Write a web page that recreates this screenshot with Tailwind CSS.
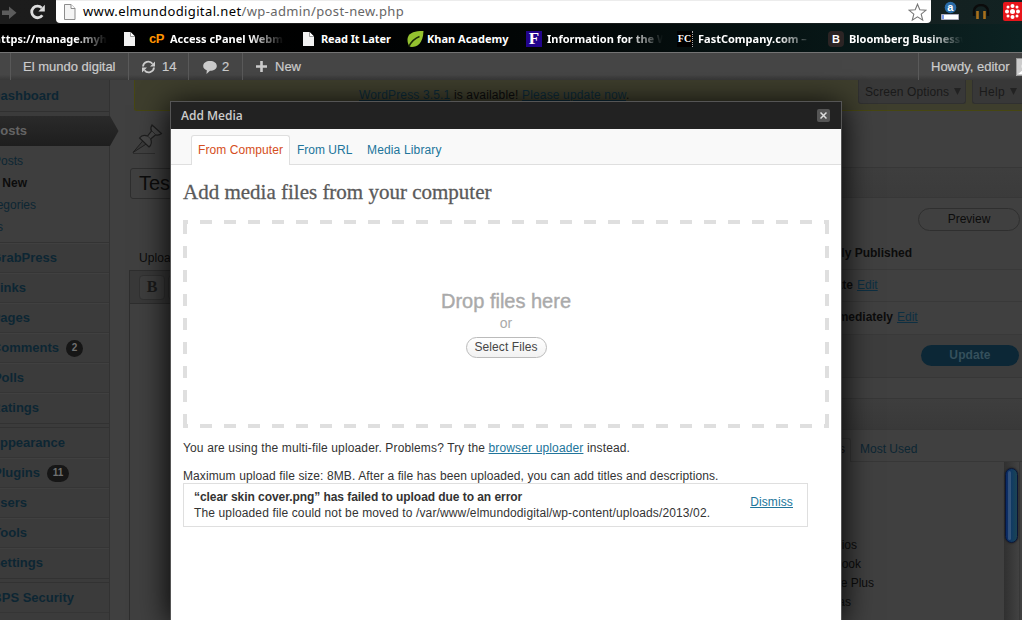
<!DOCTYPE html>
<html lang="en">
<head>
<meta charset="utf-8">
<title>Add New Post</title>
<script src="https://cdn.jsdelivr.net/npm/@tailwindcss/browser@4"></script>
</head>
<body class="relative flex h-[620px] w-[1022px] flex-col overflow-hidden bg-[#404040] font-['Liberation_Sans',sans-serif] text-[12px] leading-4 whitespace-nowrap">

<!-- browser toolbar -->
<header class="flex h-6 shrink-0 bg-linear-to-r from-[#1c1c1c] via-[#1a1a1a] to-[#122222]">
  <div class="flex w-14 shrink-0 pt-1">
    <svg class="mt-px ml-[2px] h-4 w-4" viewBox="0 0 16 16"><path d="M0 5.500h7V1.500l7.500 6.200L7 14v-4H0z" fill="#5c5c5c"/></svg>
    <svg class="ml-3 h-4 w-4" viewBox="0 0 16 16"><path d="M12.300 11.200a5.800 5.800 0 1 1-.6-7.300" fill="none" stroke="#ddd" stroke-width="2.800"/><path d="M14.800.8v6.600H8.400z" fill="#ddd"/></svg>
  </div>
  <div class="flex h-[23px] w-[875px] shrink-0 items-center rounded-b-[4px] border-t border-[#ececec] bg-white pl-2">
    <svg class="h-4 w-3" viewBox="0 0 12 16"><path d="M.5.5h6.500l4 4V15.500H.5z" fill="#f4f4f4" stroke="#8d8d8d"/><path d="M7 .5v4h4" fill="#fff" stroke="#8d8d8d"/></svg>
    <span class="-mt-[2px] ml-[7px] font-['Noto_Sans'] text-[13px] tracking-[0.386px] text-black">www.elmundodigital.net<span class="text-[#666]">/wp-admin/post-new.php</span></span>
    <svg class="mr-1 ml-auto h-[19px] w-[19px]" viewBox="0 0 19 19"><path d="M9.500 1.200l2.300 5.600 6 .5-4.600 3.900 1.500 5.900-5.200-3.200-5.200 3.200 1.500-5.900L1.200 7.300l6-.5z" fill="#fff" stroke="#777" stroke-width="1.100"/></svg>
  </div>
  <svg class="mt-px ml-[9px] h-5 w-5" viewBox="0 0 20 20"><circle cx="10.500" cy="6.500" r="5.800" fill="#2a6ca8"/><text x="7.200" y="10" font-family="Liberation Sans" font-size="11" font-weight="700" fill="#fff">a</text><path d="M1.500 13.500h17v5h-17z" fill="#fff" stroke="#aab"/><path d="M2 14h2v4H2z" fill="#7c9bea"/></svg>
  <svg class="mt-1 ml-3 h-4 w-[18px]" viewBox="0 0 18 16"><path d="M2 12V7a7 6 0 0 1 14 0v5" fill="none" stroke="#0b0b0b" stroke-width="2.400"/><path d="M5.500 7v8M12.500 7v8" stroke="#a8701c" stroke-width="2.600"/></svg>
  <svg class="mt-[2px] ml-[13px] h-[19px] w-[19px] shrink-0" viewBox="0 0 19 19"><path d="M0 2a2 2 0 0 1 2-2h17v19H2a2 2 0 0 1-2-2z" fill="#e8151b"/><g fill="#fff"><circle cx="9.500" cy="9.500" r="2.500"/><circle cx="9.500" cy="4" r="2"/><circle cx="9.500" cy="15" r="2"/><circle cx="4" cy="9.500" r="2"/><circle cx="15" cy="9.500" r="2"/><circle cx="5" cy="5" r="1.500"/><circle cx="14" cy="5" r="1.500"/><circle cx="5" cy="14" r="1.500"/><circle cx="14" cy="14" r="1.500"/></g></svg>
</header>

<!-- bookmarks bar -->
<nav class="flex h-[29px] shrink-0 items-center border-b border-[#747474] bg-linear-to-r from-black via-[#020505] to-[#0c2222] pt-px font-['Noto_Sans'] text-[11px] font-bold text-white">
  <div class="flex w-[107px] shrink-0 justify-end overflow-hidden mask-r-from-70%">https://manage.myh</div>
  <svg class="ml-[17px] h-[14px] w-[11px] shrink-0" viewBox="0 0 11 14"><path d="M0 0h6.500l4.500 4.500V14H0z" fill="#f2f2f2"/><path d="M6.500 0v4.500H11" fill="#fff" stroke="#888" stroke-width=".8"/></svg>
  <span class="ml-[14px] w-4 shrink-0 font-['Liberation_Sans'] text-[13px] tracking-[-0.5px] text-[#ff9500]">cP</span>
  <div class="ml-[5px] w-[114px] shrink-0 overflow-hidden mask-r-from-70%">Access cPanel Webm</div>
  <svg class="ml-[19px] h-[14px] w-[11px] shrink-0" viewBox="0 0 11 14"><path d="M0 0h6.500l4.500 4.500V14H0z" fill="#f2f2f2"/><path d="M6.500 0v4.500H11" fill="#fff" stroke="#888" stroke-width=".8"/></svg>
  <div class="ml-[7px] w-[86px] shrink-0 tracking-[-0.1px]">Read It Later</div>
  <svg class="h-4 w-[17px] shrink-0" viewBox="0 0 17 16"><path d="M16.500 0C8-.4 1 2 .5 8c-.2 3 .8 6 2.500 7.800C9 16.500 16 14 16.500 0z" fill="#94c22f"/><path d="M1.800 15.500C5 9.500 8.500 7 12.500 5.500" stroke="#1c2a08" stroke-width="1.600" fill="none"/></svg>
  <div class="ml-[3px] w-[99px] shrink-0">Khan Academy</div>
  <span class="flex h-4 w-4 shrink-0 items-center justify-center bg-[#22048c] font-['Liberation_Serif'] text-[17px]">F</span>
  <div class="ml-[5px] w-[116px] shrink-0 overflow-hidden mask-r-from-70%">Information for the W</div>
  <span class="ml-[14px] flex h-4 w-4 shrink-0 items-center justify-center border-r border-dotted border-[#aaa] bg-black font-['Liberation_Serif'] text-[10px]">FC</span>
  <div class="ml-[5px] w-[114px] shrink-0 overflow-hidden mask-r-from-70%">FastCompany.com –</div>
  <span class="ml-4 flex h-4 w-4 shrink-0 items-center justify-center rounded-sm bg-[#2b2424] font-['Liberation_Sans'] text-[11px]">B</span>
  <div class="ml-[5px] w-[114px] shrink-0 overflow-hidden mask-r-from-70%">Bloomberg Businessw</div>
</nav>

<!-- WordPress admin bar -->
<div class="flex h-[27px] shrink-0 items-center bg-linear-to-b from-[#464646] from-80% to-[#383838] text-[13px] text-[#ccc] [-webkit-text-stroke:0.2px_#ccc]">
  <div class="h-full w-[11px] border-r border-[#585858]"></div>
  <div class="flex h-full w-[118px] items-center border-r border-[#5a5a5a] pl-3">El mundo digital</div>
  <div class="flex h-full w-[60px] items-center border-r border-[#5a5a5a] pl-3">
    <svg class="h-[14px] w-[15px]" viewBox="0 0 15 14"><g fill="none" stroke="#ccc" stroke-width="1.800"><path d="M2 6.500A5.300 5.300 0 0 1 11.500 3.800"/><path d="M13 7.500A5.300 5.300 0 0 1 3.500 10.200"/></g><path d="M14 1.500v5H9zM1 12.500v-5h5z" fill="#ccc"/></svg>
    <span class="ml-[6px]">14</span></div>
  <div class="flex h-full w-[54px] items-center border-r border-[#5a5a5a] pl-[14px]">
    <svg class="h-[14px] w-[14px]" viewBox="0 0 14 14"><path d="M7 1c4 0 6.800 2 6.800 5S11 10.800 7 10.800L3.500 14l.3-3.700C1.500 9.500.2 8 .2 6 .2 3 3 1 7 1z" fill="#ccc"/></svg>
    <span class="ml-[5px]">2</span></div>
  <div class="flex h-full items-center pl-[13px]">
    <svg class="h-[11px] w-[11px]" viewBox="0 0 11 11"><path d="M5.500 0v11M0 5.500h11" stroke="#ccc" stroke-width="2.600"/></svg>
    <span class="ml-2">New</span></div>
  <div class="ml-auto flex h-full w-[104px] items-center border-l border-[#5a5a5a] pl-3"><span>Howdy, editor</span>
    <svg class="ml-[6px] h-[18px] w-[8px] shrink-0" viewBox="0 0 8 18"><path d="M0 0h8v18H0z" fill="#ccc"/><path d="M8 5C5 5 5 10 7 12l-5 4h6z" fill="#fff"/><path d="M.5 0v17.500H8M0 .5h8" stroke="#999" fill="none"/></svg></div>
</div>

<!-- dimmed admin page -->
<div class="flex min-h-0 flex-1 overflow-hidden">
  <!-- admin menu -->
  <aside class="flex w-[110px] shrink-0 flex-col overflow-hidden border-r border-[#323232] bg-[#3b3b3b] text-[13px] font-bold text-[#0d2633]">
    <div class="flex h-8 shrink-0 items-center border-b border-[#303030]"><div class="flex w-[59px] justify-end">Dashboard</div></div>
    <div class="mt-1 flex h-[30px] shrink-0 items-center bg-linear-to-b from-[#2a2a2a] to-[#1e1e1e] text-[#646464]"><div class="flex w-[27px] justify-end">Posts</div></div>
    <div class="flex h-[97px] shrink-0 flex-col border-b border-[#333] bg-[#3e3e3e] pt-1 text-[12px] font-normal">
      <div class="flex h-[22px] w-[23px] items-center justify-end">All Posts</div>
      <div class="flex h-[22px] w-[27px] items-center justify-end font-bold text-[#0c0c0c]">Add New</div>
      <div class="flex h-[22px] w-9 items-center justify-end">Categories</div>
      <div class="flex h-[22px] w-[3px] items-center justify-end">Tags</div>
    </div>
    <div class="flex h-[30px] shrink-0 items-center border-t border-b border-t-[#404040] border-b-[#353535]"><div class="flex w-[57px] justify-end">GrabPress</div></div>
    <div class="flex h-[30px] shrink-0 items-center border-t border-b border-t-[#404040] border-b-[#353535]"><div class="flex w-[26px] justify-end">Links</div></div>
    <div class="flex h-[30px] shrink-0 items-center border-t border-b border-t-[#404040] border-b-[#353535]"><div class="flex w-[30px] justify-end">Pages</div></div>
    <div class="flex h-[30px] shrink-0 items-center border-t border-b border-t-[#404040] border-b-[#353535]"><div class="flex w-[59px] justify-end">Comments</div><span class="ml-[7px] flex h-[17px] w-[17px] items-center justify-center rounded-full bg-[#161616] text-[10px] text-[#707070]">2</span></div>
    <div class="flex h-[30px] shrink-0 items-center border-t border-b border-t-[#404040] border-b-[#353535]"><div class="flex w-6 justify-end">Polls</div></div>
    <div class="flex h-[31px] shrink-0 items-center border-t border-b border-t-[#404040] border-b-[#323232] pb-px"><div class="flex w-[39px] justify-end">Ratings</div></div>
    <div class="mt-[3px] flex h-[31px] shrink-0 items-center border-t border-b border-t-[#323232] border-b-[#353535]"><div class="flex w-[65px] justify-end">Appearance</div></div>
    <div class="flex h-[30px] shrink-0 items-center border-t border-b border-t-[#404040] border-b-[#353535]"><div class="flex w-10 justify-end">Plugins</div><span class="ml-[7px] flex h-[17px] w-[22px] items-center justify-center rounded-full bg-[#161616] text-[10px] text-[#707070]">11</span></div>
    <div class="flex h-[30px] shrink-0 items-center border-t border-b border-t-[#404040] border-b-[#353535]"><div class="flex w-[27px] justify-end">Users</div></div>
    <div class="flex h-[30px] shrink-0 items-center border-t border-b border-t-[#404040] border-b-[#353535]"><div class="flex w-[27px] justify-end">Tools</div></div>
    <div class="flex h-[31px] shrink-0 items-center border-t border-b border-t-[#404040] border-b-[#323232] pb-px"><div class="flex w-[43px] justify-end">Settings</div></div>
    <div class="mt-[3px] flex h-[31px] shrink-0 items-center border-t border-b border-t-[#323232] border-b-[#353535]"><div class="flex w-[74px] justify-end">BPS Security</div></div>
  </aside>
  <svg class="absolute top-[116px] left-[109px] h-[30px] w-[10px]" viewBox="0 0 10 30"><defs><linearGradient id="tip" x1="0" y1="0" x2="0" y2="1"><stop offset="0" stop-color="#2a2a2a"/><stop offset="1" stop-color="#1e1e1e"/></linearGradient></defs><path d="M0 0h1l8.500 15L1 30H0z" fill="url(#tip)"/></svg>

  <!-- post editor -->
  <main class="flex w-[732px] shrink-0 flex-col">
    <div class="ml-6 flex h-[31px] shrink-0 rounded-bl-[3px] border-b border-l border-[#474712] bg-[#3e3e2d] pt-[7px] pl-[224px] text-[#0c0c0c]"><span class="tracking-[0.15px]"><span class="text-[#0d2a38] underline">WordPress 3.5.1</span> is available! <span class="text-[#0d2a38] underline">Please update now</span>.</span></div>
    <svg class="mt-3 ml-[22px] h-8 w-8 shrink-0" viewBox="0 0 32 32"><path d="M1 29.500L11.500 17l3.500 3.500z" fill="#3a3a3a" stroke="#202020"/><path d="M7.500 15c2-2.500 5-3 8-2l4-5c-1-2-.8-4 .5-6l9.500 8.500c-2 1.800-4 2-5.800 1.200l-5 4.300c1.300 3 .6 6-1.700 8z" fill="#474747" stroke="#1e1e1e" stroke-width="1.200"/><path d="M15.500 13l3.300 3M20 8l3.500 3.500" stroke="#2a2a2a"/><path d="M1 30.500h22" stroke="#2e2e2e"/></svg>
    <div class="mt-[13px] ml-5 flex h-[31px] shrink-0 items-center rounded-[3px] border border-[#2e2e2e] pb-[2px] pl-2 text-[20px] text-[#0c0c0c]">Test post</div>
    <div class="mt-[51px] ml-[29px] tracking-[0.1px] text-[#0c0c0c]">Upload/Insert</div>
    <div class="mt-1 ml-[19px] flex flex-1 flex-col border-t border-l border-[#2e2e2e]">
      <div class="flex h-[33px] items-center border-b border-[#2e2e2e] bg-[#393939] pl-[9px]"><span class="flex h-[25px] w-[26px] items-center justify-center rounded-sm border border-[#313131] bg-[#3e3e3e] font-['Liberation_Serif'] text-[16px] font-bold text-[#1a1a1a]">B</span><span class="ml-[3px] h-[25px] w-[26px] rounded-sm border border-[#313131] bg-[#3e3e3e]"></span></div>
    </div>
  </main>

  <!-- right column -->
  <section class="flex flex-1 flex-col overflow-hidden text-[#0c0c0c]">
    <div class="flex h-[31px] shrink-0 border-b border-[#474712] bg-[#3e3e2d] pl-4 text-[#1a1a1a]">
      <div class="flex h-6 w-[108px] shrink-0 items-center rounded-b-[3px] border-x border-b border-[#303030] bg-[#383838] pl-[6px]"><span class="tracking-[0.1px]">Screen Options</span><svg class="ml-[5px] h-[7px] w-[7px]" viewBox="0 0 7 7"><path d="M0 0h7L3.500 7z" fill="#222"/></svg></div>
      <div class="ml-[6px] flex h-6 w-[52px] shrink-0 items-center rounded-bl-[3px] border-b border-l border-[#303030] bg-[#383838] pl-[6px]"><span class="tracking-[0.3px]">Help</span><svg class="ml-[5px] h-[7px] w-[7px]" viewBox="0 0 7 7"><path d="M0 0h7L3.500 7z" fill="#222"/></svg></div>
    </div>
    <div class="mt-14 h-[31px] shrink-0 border-y border-[#373737] bg-linear-to-b from-[#3e3e3e] to-[#3b3b3b]"></div>
    <div class="flex h-[41px] shrink-0 justify-end pt-[10px] pr-[2px]"><div class="flex h-[23px] w-[102px] items-center justify-center rounded-full border border-[#2f2f2f] pb-[2px]">Preview</div></div>
    <div class="flex h-[31px] shrink-0 items-center border-b border-[#393939] pb-[2px]"><div class="flex w-[70px] justify-end font-bold">Immediately Published</div></div>
    <div class="flex h-8 shrink-0 items-center border-b border-[#393939] pb-[2px]"><div class="flex w-[11px] justify-end font-bold">Private</div><span class="ml-1 text-[#0d2f42] underline">Edit</span></div>
    <div class="flex h-[33px] shrink-0 items-center border-b border-[#393939] pb-[2px]"><div class="flex w-[51px] justify-end font-bold">Immediately</div><span class="ml-1 text-[#0d2f42] underline">Edit</span></div>
    <div class="flex h-[43px] shrink-0 justify-end border-b border-[#373737] bg-[#3d3d3d] pt-[10px] pr-[3px]"><div class="flex h-[21px] w-[98px] items-center justify-center rounded-full bg-[#0c2736] pb-px text-[12px] font-bold tracking-[0.1px] text-[#35505c]">Update</div></div>
    <div class="mt-5 h-8 shrink-0 border-y border-[#373737] bg-linear-to-b from-[#3e3e3e] to-[#393939]"></div>
    <div class="mt-2 flex h-6 shrink-0 border-b border-[#373737]"><div class="flex h-6 w-[9px] shrink-0 justify-end rounded-tr-[3px] border-t border-r border-[#373737] bg-[#404040] pt-[2px] pr-[5px] text-[#0c0c0c]">Categories</div><span class="ml-[9px] pt-[3px] text-[#0d2633]">Most Used</span></div>
    <div class="flex flex-1 overflow-hidden">
      <div class="flex w-[162px] flex-col pt-[74px] leading-[19px]"><div class="flex w-[15px] justify-end">Servicios</div><div class="flex w-[19px] justify-end">Facebook</div><div class="flex w-8 justify-end">Google Plus</div><div class="flex w-[9px] justify-end">Noticias</div></div>
      <div class="w-4 border-r border-[#373737] bg-linear-to-r from-[#303030] to-[#424242] pt-[6px] pl-px"><div class="h-[75px] w-[13px] rounded-full border border-[#0a1638] bg-linear-to-r from-[#0c2a66] via-[#123c60] via-60% to-[#1c4452] p-[2px] shadow-[0_0_2px_#111]"><div class="h-full w-[3px] rounded-full bg-white/15"></div></div></div>
    </div>
  </section>
</div>

<!-- media dialog -->
<div class="absolute top-[101px] left-[170px] flex h-[519px] w-[672px] flex-col border border-b-0 border-[#555] bg-white text-[#333] shadow-[0_4px_30px_#000]">
  <div class="flex h-[27px] shrink-0 items-center bg-[#222] pr-[11px] pl-[10px] font-['Open_Sans'] font-semibold text-[#ccc]"><span>Add Media</span>
    <span class="ml-auto flex h-[13px] w-[13px] items-center justify-center rounded-[2px] bg-[#555]"><svg class="h-[7px] w-[7px]" viewBox="0 0 7 7"><path d="M.5.5l6 6M6.500.5l-6 6" stroke="#ddd" stroke-width="1.500"/></svg></span></div>
  <div class="flex h-9 shrink-0 items-end border-b border-[#dfdfdf] bg-[#f9f9f9] pl-5 text-[#21759b]">
    <div class="-mb-px flex h-[30px] w-[99px] items-center justify-center rounded-t-[3px] border border-b-0 border-[#dfdfdf] bg-white pb-[2px] tracking-[0.08px] text-[#d54e21]">From Computer</div>
    <span class="mb-[6px] ml-[7px] w-[70px]">From URL</span><span class="mb-[6px] tracking-[0.15px]">Media Library</span>
  </div>
  <div class="flex flex-col pl-3">
    <h3 class="mt-[13px] self-start font-['Liberation_Serif'] text-[21px] leading-7 text-[#5a5a5a] [-webkit-text-stroke:0.3px_#5a5a5a]">Add media files from your computer</h3>
    <div class="relative mt-[14px] flex h-[208px] w-[646px] flex-col items-center text-[#aaa]">
      <svg class="absolute inset-0" width="646" height="208" viewBox="0 0 646 208"><g stroke="#dfdfdf" stroke-width="4" stroke-dasharray="12 12"><path d="M17 2h612M17 206h612M2 2v204M644 2v204"/></g><path d="M0 0h5v4H4v10H0zM641 0h5v14h-4V4h-1zM0 208h5v-4H4v-10H0zM641 208h5v-14h-4v10h-1z" fill="#dfdfdf"/></svg>
      <span class="mt-[69px] text-[20px] leading-6 [-webkit-text-stroke:0.4px_#aaa]">Drop files here</span>
      <span class="text-[14px] leading-5">or</span>
      <span class="mt-1 flex h-[21px] w-[81px] items-center justify-center rounded-full border border-[#bbb] bg-linear-to-b from-white to-[#f2f2f2] pb-[2px] tracking-[0.08px] text-[#464646]">Select Files</span>
    </div>
    <p class="mt-3 tracking-[0.137px]">You are using the multi-file uploader. Problems? Try the <span class="text-[#21759b] underline">browser uploader</span> instead.</p>
    <p class="mt-3 tracking-[0.1px]">Maximum upload file size: 8MB. After a file has been uploaded, you can add titles and descriptions.</p>
    <div class="-mt-px flex h-11 w-[625px] items-start border border-[#dfdfdf] bg-white pt-[5px] pl-[10px]">
      <div><div class="font-bold tracking-[-0.055px]">“clear skin cover.png” has failed to upload due to an error</div><div class="tracking-[0.13px]">The uploaded file could not be moved to /var/www/elmundodigital/wp-content/uploads/2013/02.</div></div>
      <span class="mt-[5px] mr-[14px] ml-auto tracking-[0.12px] text-[#21759b] underline">Dismiss</span>
    </div>
  </div>
</div>
</body>
</html>
